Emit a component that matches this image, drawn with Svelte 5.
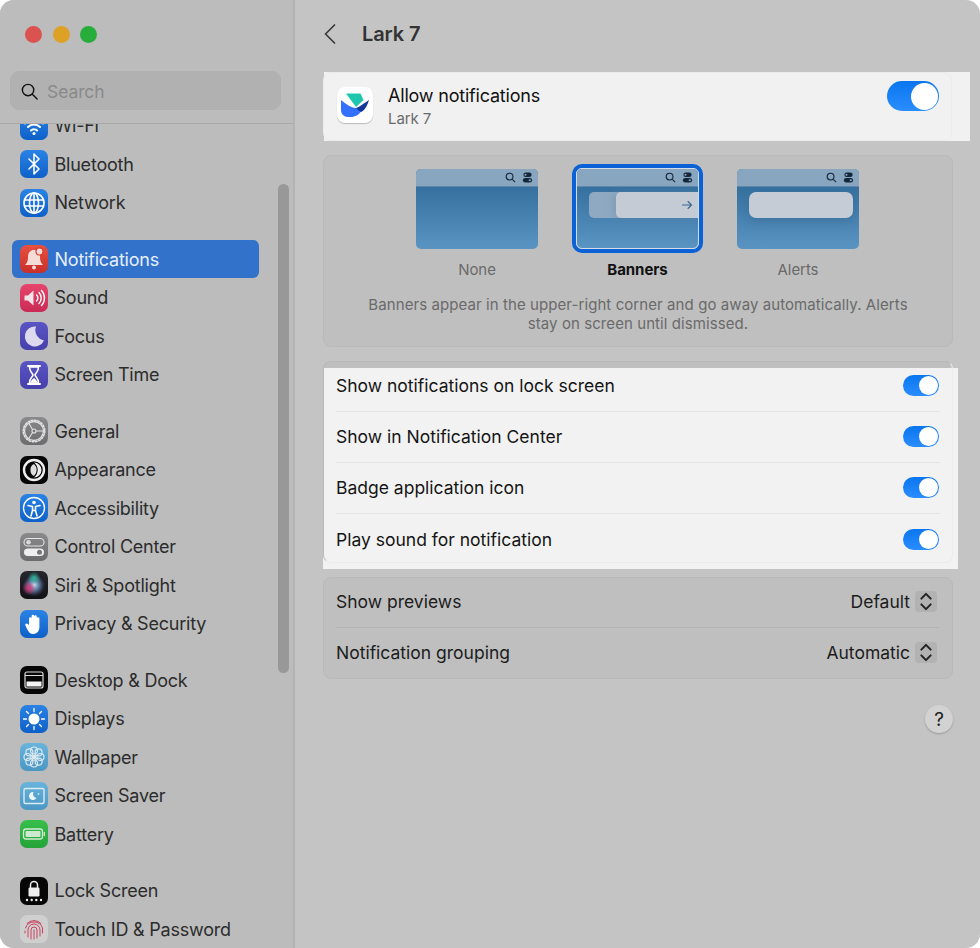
<script>
  const groups = [
    [['wifi','Wi-Fi'],['bt','Bluetooth'],['net','Network']],
    [['notif','Notifications'],['sound','Sound'],['focus','Focus'],['time','Screen Time']],
    [['general','General'],['appear','Appearance'],['access','Accessibility'],['control','Control Center'],['siri','Siri & Spotlight'],['privacy','Privacy & Security']],
    [['desktop','Desktop & Dock'],['displays','Displays'],['wall','Wallpaper'],['saver','Screen Saver'],['battery','Battery']],
    [['lock','Lock Screen'],['touch','Touch ID & Password']]
  ];
  const toggles = ['Show notifications on lock screen','Show in Notification Center','Badge application icon','Play sound for notification'];
  const selects = [['Show previews','Default'],['Notification grouping','Automatic']];
  const previews = [['none','None'],['banners','Banners'],['alerts','Alerts']];
</script>

{#snippet glyph(k)}
  <svg viewBox="0 0 28 28" class="glyph" fill="none" stroke="#fff" stroke-width="1.6" stroke-linecap="round" stroke-linejoin="round">
    {#if k==='wifi'}
      <path d="M5 11.5a13 13 0 0 1 18 0M8 15a8.500 8.500 0 0 1 12 0M11 18.500a4 4 0 0 1 6 0" stroke-width="2"/><circle cx="14" cy="21.500" r="1.500" fill="#fff" stroke="none"/>
    {:else if k==='bt'}
      <path d="M9 9l10 10-5 5V4l5 5L9 19"/>
    {:else if k==='net'}
      <circle cx="14" cy="14" r="10"/><ellipse cx="14" cy="14" rx="4.500" ry="10"/><path d="M14 4v20M4.500 11h19M4.500 17h19"/>
    {:else if k==='notif'}
      <path d="M14 5c-4 0-6 3-6 7 0 4-1 6-3 8h18c-2-2-3-4-3-8 0-4-2-7-6-7z" fill="#f6dcd7" stroke="none"/><circle cx="14" cy="22.500" r="2" fill="#f6dcd7" stroke="none"/><circle cx="19.500" cy="6.500" r="3.500" fill="#f6dcd7" stroke="#d93a30" stroke-width="1.200"/>
    {:else if k==='sound'}
      <path d="M4.500 11.500h3.500l5.500-5v15l-5.500-5H4.500z" fill="#f4e3e8" stroke="none"/><path d="M16.500 11a4 4 0 0 1 0 6M19 8.500a8 8 0 0 1 0 11M21.500 6.500a11 11 0 0 1 0 15" stroke-width="1.400"/>
    {:else if k==='focus'}
      <path d="M16 4.500a10 10 0 1 0 8 14A10.500 10.500 0 0 1 16 4.500z" fill="#dcd9ee" stroke="none"/>
    {:else if k==='time'}
      <path d="M8 5h12M8 23h12" stroke-width="2"/><path d="M9.500 6c0 5 3 6 3.500 8-.5 2-3.500 3-3.500 8h9c0-5-3-6-3.500-8 .5-2 3.500-3 3.500-8z"/><path d="M10.500 21.500c.5-2.500 2.500-3.500 3.500-4.500 1 1 3 2 3.500 4.500z" fill="#fff" stroke="none"/>
    {:else if k==='general'}
      <circle cx="14" cy="14" r="9.500" stroke="#e2e2e2" stroke-width="1.300"/><circle cx="14" cy="14" r="10.800" stroke="#e2e2e2" stroke-width="1.500" stroke-dasharray="1.700 1.700"/><circle cx="14" cy="14" r="2" stroke="#e2e2e2" stroke-width="1.100"/><path d="M12.500 12.500L9 6.500M16 14h8M12.500 15.500L8.500 22" stroke="#e2e2e2" stroke-width="1.100"/>
    {:else if k==='appear'}
      <circle cx="14" cy="14" r="10" stroke="#eee" stroke-width="2.400"/><path d="M14 6.500a7.500 7.500 0 0 1 0 15 9.500 9.500 0 0 0 0-15z" fill="#eee" stroke="none"/><path d="M14 8a6 6 0 0 0-3.500 6 6 6 0 0 0 3.500 6 8 8 0 0 0 0-12z" fill="#ddd" stroke="none"/>
    {:else if k==='access'}
      <circle cx="14" cy="14" r="10.500" stroke-width="1.300"/><circle cx="14" cy="8.500" r="1.800" fill="#fff" stroke="none"/><path d="M8 11.500l4.500 1v4l-1.500 5.500M20 11.500l-4.500 1v4l1.500 5.500M12.500 16.500h3" stroke-width="1.600"/>
    {:else if k==='control'}
      <rect x="4" y="5.500" width="20" height="7.500" rx="3.750" stroke="#e6e6e6" stroke-width="1.100"/><circle cx="8.500" cy="9.250" r="2.300" fill="#d8d8d8" stroke="none"/><rect x="4" y="15.500" width="20" height="7.500" rx="3.750" fill="#eee" stroke="none"/><circle cx="19.500" cy="19.250" r="2.500" fill="#777" stroke="none"/>
    {:else if k==='siri'}
      <defs>
        <radialGradient id="siriG" cx="50%" cy="50%" r="50%"><stop offset="0" stop-color="#d6e6ee"/><stop offset=".35" stop-color="#6d93b8"/><stop offset=".8" stop-color="#30334a"/><stop offset="1" stop-color="#1a1a22"/></radialGradient>
        <radialGradient id="siriP" cx="50%" cy="50%" r="50%"><stop offset="0" stop-color="#d83a78"/><stop offset="1" stop-color="#d83a78" stop-opacity="0"/></radialGradient>
        <radialGradient id="siriT" cx="50%" cy="50%" r="50%"><stop offset="0" stop-color="#2fb59a"/><stop offset="1" stop-color="#2fb59a" stop-opacity="0"/></radialGradient>
      </defs>
      <circle cx="14" cy="14" r="11" fill="url(#siriG)" stroke="none"/><circle cx="9" cy="17" r="7" fill="url(#siriP)" stroke="none"/><circle cx="14" cy="7" r="6.500" fill="url(#siriT)" stroke="none"/>
    {:else if k==='privacy'}
      <path d="M9 15V8.500a1.300 1.300 0 0 1 2.600 0V6a1.300 1.300 0 0 1 2.600 0V6.500a1.300 1.300 0 0 1 2.600 0v2a1.300 1.300 0 0 1 2.600 0V17c0 4-2.500 7-6 7-3 0-4.500-1.500-6-4.500l-2-4c-.8-1.600 1.300-2.800 2.300-1.400z" fill="#fff" stroke="none"/>
    {:else if k==='desktop'}
      <rect x="5" y="6" width="18" height="16" rx="2" stroke="#ddd" stroke-width="1.200"/><path d="M5.500 9.500h17" stroke="#ddd" stroke-width="1"/><rect x="6.500" y="15.500" width="15" height="5" fill="#f4f4f4" stroke="none"/>
    {:else if k==='displays'}
      <circle cx="14" cy="14" r="5.500" fill="#fff" stroke="none"/><path d="M14 3.500v3M14 21.500v3M3.500 14h3M21.500 14h3M6.500 6.500l2 2M19.500 19.500l2 2M6.500 21.500l2-2M19.500 8.500l2-2" stroke-width="1.300"/>
    {:else if k==='wall'}
      <g stroke="#dfeaf0" stroke-width="1.100"><circle cx="14" cy="7.500" r="3.500"/><circle cx="14" cy="20.500" r="3.500"/><circle cx="7.500" cy="14" r="3.500"/><circle cx="20.500" cy="14" r="3.500"/><circle cx="9.400" cy="9.400" r="3.500"/><circle cx="18.600" cy="9.400" r="3.500"/><circle cx="9.400" cy="18.600" r="3.500"/><circle cx="18.600" cy="18.600" r="3.500"/><circle cx="14" cy="14" r="1.800" fill="#dfeaf0"/></g>
    {:else if k==='saver'}
      <rect x="4" y="6.500" width="20" height="15" rx="1.500" stroke="#dcebf2" stroke-width="1.400"/><path d="M13.500 10a4 4 0 1 0 3 6 4 4 0 0 1-3-6z" fill="#eef5f9" stroke="none"/><circle cx="18.500" cy="12" r=".8" fill="#fff" stroke="none"/>
    {:else if k==='battery'}
      <rect x="3.500" y="9" width="19" height="10" rx="2.500" stroke="#d5ecd6" stroke-width="1.300"/><rect x="5.500" y="11" width="15" height="6" rx="1" fill="#cfe9d0" stroke="none"/><path d="M24.300 12.500v3" stroke="#d5ecd6" stroke-width="1.300"/>
    {:else if k==='lock'}
      <rect x="8.500" y="10.500" width="11" height="9" rx="1.300" fill="#eee" stroke="none"/><path d="M10.500 10.500V8a3.500 3.500 0 0 1 7 0v2.500" stroke="#eee" stroke-width="1.500"/><g fill="#eee" stroke="none"><circle cx="7" cy="23" r="1.200"/><circle cx="11.700" cy="23" r="1.200"/><circle cx="16.300" cy="23" r="1.200"/><circle cx="21" cy="23" r="1.200"/></g>
    {:else if k==='touch'}
      <g stroke="#c9425f" stroke-width="1"><path d="M7 8.500a9.500 9.500 0 0 1 14 0"/><path d="M5.500 13a9 9 0 0 1 17 0v5"/><path d="M8 22v-7a6 6 0 0 1 12 0v6"/><path d="M11 24v-9a3 3 0 0 1 6 0v8"/><path d="M14 24v-9"/><path d="M5 18v-2"/></g>
    {/if}
  </svg>
{/snippet}

{#snippet toggle(big)}
  <span class="toggle" class:big><span class="knob"></span></span>
{/snippet}

<div class="window">
  <aside class="sidebar">
    <div class="lights"><i class="red"></i><i class="amber"></i><i class="green"></i></div>
    <div class="search">
      <svg viewBox="0 0 20 20" class="mag" fill="none" stroke="#111" stroke-width="1.500" stroke-linecap="round"><circle cx="8.500" cy="8.500" r="6"/><path d="M13 13l5 5"/></svg>
      <span>Search</span>
    </div>
    <div class="scrollarea">
      <nav class="list">
        {#each groups as g}
          <div class="group">
            {#each g as [k, label]}
              <div class="row" class:sel={k==='notif'}>
                <span class="icon {k}">{@render glyph(k)}</span>
                <span>{label}</span>
              </div>
            {/each}
          </div>
        {/each}
      </nav>
    </div>
    <div class="thumb"></div>
  </aside>

  <main class="main">
    <header class="title">
      <svg viewBox="0 0 12 20" class="back" fill="none" stroke="#3a3a3a" stroke-width="1.700" stroke-linecap="round" stroke-linejoin="round"><path d="M10.500 1L1.500 10l9 9"/></svg>
      <h1>Lark 7</h1>
    </header>

    <section class="allow">
      <span class="lark">
        <svg viewBox="0 0 36 36" width="36" height="36">
          <path d="M9 6.500H23.500L26.500 13 19 20z" fill="#1fc6ae"/>
          <path d="M4 13c5 4 10 8 15 8l6 2c-3 5-7 7-11 7h-3c-4 0-7-3-7-7z" fill="#3370ff"/>
          <path d="M19 21c4-1 8-5 13-8-2 6-4 10-8 12-2-1-4-3-5-4z" fill="#12369a"/>
        </svg>
      </span>
      <div class="allow-text"><div class="allow-name">Allow notifications</div><div class="allow-sub">Lark 7</div></div>
      {@render toggle(true)}
    </section>

    <section class="styles">
      <div class="previews">
        {#each previews as [k, label]}
          <div class="preview">
            <div class="frame" class:active={k==='banners'}>
              <div class="shot">
                <div class="menubar">
                  <svg viewBox="0 0 12 12" class="mini" fill="none" stroke="#14263a" stroke-width="1.200"><circle cx="5" cy="5" r="3.700"/><path d="M8 8l3 3"/></svg>
                  <svg viewBox="0 0 12 12" class="mini" fill="#14263a" stroke="none"><rect x="1.500" y=".5" width="9" height="5" rx="2.500"/><rect x="1" y="6.500" width="10" height="5" rx="2.500"/><circle cx="3.800" cy="3" r="1.200" fill="#88a6bf"/><circle cx="8.500" cy="9" r="1.200" fill="#88a6bf"/></svg>
                </div>
                {#if k==='banners'}
                  <div class="ghost"></div>
                  <div class="banner">
                    <svg viewBox="0 0 12 12" class="arrow" fill="none" stroke="#3e6690" stroke-width="1.100" stroke-linecap="round" stroke-linejoin="round"><path d="M1.500 6h9M7 2.500L10.500 6 7 9.500"/></svg>
                  </div>
                {:else if k==='alerts'}
                  <div class="alert"></div>
                {/if}
              </div>
            </div>
            <div class="plabel" class:on={k==='banners'}>{label}</div>
          </div>
        {/each}
      </div>
      <p class="desc">Banners appear in the upper-right corner and go away automatically. Alerts<br>stay on screen until dismissed.</p>
    </section>

    <section class="togglecard">
      <div class="rows">
        {#each toggles as t}
          <div class="trow"><span>{t}</span>{@render toggle(false)}</div>
        {/each}
      </div>
    </section>

    <section class="selectcard">
      {#each selects as [l, v]}
        <div class="srow">
          <span>{l}</span>
          <span class="val">{v}
            <span class="stepper"><svg viewBox="0 0 12 18" width="14" height="21" fill="none" stroke="#222" stroke-width="1.700" stroke-linecap="round" stroke-linejoin="round"><path d="M2 6.500L6 2.500l4 4M2 11.500L6 15.500l4-4"/></svg></span>
          </span>
        </div>
      {/each}
    </section>

    <div class="helpwrap"><span class="help">?</span></div>
  </main>
</div>

<style>
  :global(body) { margin: 0; background: #fff; }
  .window {
    width: 980px; height: 948px; display: flex; overflow: hidden; border-radius: 14px;
    font-family: Inter, "Liberation Sans", sans-serif; background: #c4c4c4; color: #1a1a1a;
  }
  .sidebar {
    position: relative; width: 293px; flex: none; height: 948px; background: #bcbcbc;
    border-right: 2px solid #b3b3b3; box-sizing: content-box; display: flex; flex-direction: column;
  }
  .lights { display: flex; gap: 10.500px; padding: 25.500px 0 0 25px; height: 20.500px; }
  .lights i { width: 17px; height: 17px; border-radius: 50%; display: block; }
  .red { background: #db5350; }
  .amber { background: #dda126; }
  .green { background: #27ad3c; }
  .search {
    margin: 25px 12px 0 10px; height: 39px; border-radius: 9px; background: #b1b1b1;
    border: 1px solid #b0b0b0; box-sizing: border-box; display: flex; align-items: center; gap: 8px;
    padding: 1px 0 0 9px; color: #8a8a8a; font-size: 17.500px; letter-spacing: -.1px;
  }
  .mag { width: 19px; height: 19px; }
  .scrollarea { margin-top: 13px; border-top: 1px solid #a9a9a9; height: 824px; overflow: hidden; }
  .list { margin-top: -17.700px; padding: 0 34px 0 12px; }
  .group + .group { margin-top: 18px; }
  .row {
    height: 38.500px; display: flex; align-items: center; gap: 6.500px; padding-left: 8px; border-radius: 6px;
    font-size: 18px; color: #2c2c2c; letter-spacing: -.22px; box-sizing: border-box;
  }
  .row.sel { background: #3272cb; color: #e6eefa; }
  .icon { width: 28px; height: 28px; border-radius: 7px; flex: none; display: block; background: linear-gradient(#2a83e4, #0e60c9); }
  .glyph { width: 28px; height: 28px; display: block; }
  .notif { background: linear-gradient(#e8503f, #c9302a); }
  .sound { background: linear-gradient(#e8456c, #c92a55); }
  .focus, .time { background: linear-gradient(#5a55c4, #4640ab); }
  .general, .control { background: linear-gradient(#8a8a8c, #6c6c6e); }
  .appear, .desktop, .lock { background: #060606; }
  .siri { background: linear-gradient(#26262c, #121216); }
  .wall, .saver { background: linear-gradient(#68b4dc, #4b97c4); }
  .battery { background: linear-gradient(#38bf4a, #24a338); }
  .touch { background: #cfcfcf; }
  .thumb { position: absolute; left: 278px; top: 184px; width: 11px; height: 489px; border-radius: 6px; background: #989898; }

  .main { flex: 1; padding-left: 28px; min-width: 0; display: flex; flex-direction: column; align-items: flex-start; }
  .title { height: 72px; display: flex; align-items: center; padding: 0 0 4px 1px; box-sizing: border-box; }
  .back { width: 12px; height: 20px; margin-right: 26px; }
  h1 { margin: 0; font-size: 20px; font-weight: 600; color: #333; letter-spacing: -.1px; }

  .allow {
    position: relative; width: 646px; height: 69px; margin-left: 1px; background: #f1f1f1; display: flex; align-items: flex-start;
    padding: 9px 31px 0 13px; box-sizing: border-box;
  }
  .allow::after { content: ""; position: absolute; left: -1px; top: 0; width: 629px; height: 69px; box-sizing: border-box; border: 1px solid #ebebeb; border-radius: 8px; }
  .lark { width: 36px; height: 36px; margin-top: 6px; flex: none; border-radius: 8px; background: #fff; box-shadow: 0 1px 1px #bbb; display: block; }
  .allow-text { flex: 1; padding: 3.500px 0 0 15px; }
  .allow-name { font-size: 18px; color: #111; letter-spacing: -.2px; line-height: 22px; }
  .allow-sub { font-size: 15px; color: #6b6b6b; margin-top: 2.500px; line-height: 20px; letter-spacing: -.1px; }

  .toggle { display: block; width: 36px; height: 21px; border-radius: 11px; background: linear-gradient(#0a76ee, #2a8dff); position: relative; flex: none; }
  .knob { position: absolute; right: 1px; top: 1px; width: 19px; height: 19px; border-radius: 50%; background: #fff; }
  .toggle.big { width: 52px; height: 30px; border-radius: 15px; }
  .big .knob { width: 27px; height: 27px; top: 1.500px; right: 1.500px; }

  .styles {
    width: 630px; height: 192px; margin-top: 14px; background: #bfbfbf; border: 1px solid #b9b9b9; border-radius: 8px;
    box-sizing: border-box; display: flex; flex-direction: column; align-items: center;
  }
  .previews { display: flex; gap: 29.500px; margin: 8px 1px 0 0; }
  .preview { width: 131px; display: flex; flex-direction: column; align-items: center; }
  .frame { width: 131px; height: 89px; box-sizing: border-box; border-radius: 10px; border: 4px solid transparent; }
  .frame.active { border-color: #0b61d6; }
  .shot { width: 122px; height: 80px; box-sizing: border-box; margin: .5px; border-radius: 5px; overflow: hidden; position: relative; background: linear-gradient(#36709f 18px, #5a94c2); }
  .frame.active .shot { width: 123px; height: 81px; margin: 0; border: 1px solid #d4dde6; border-radius: 6px; }
  .menubar { height: 17px; background: #88a6bf; display: flex; justify-content: flex-end; align-items: center; gap: 6px; padding-right: 5px; border-bottom: 1px solid #5f88ab; }
  .mini { width: 11px; height: 11px; }
  .ghost { position: absolute; left: 12px; top: 23px; width: 50px; height: 26px; border-radius: 5px; background: #8fa9c2; }
  .banner { position: absolute; left: 39px; top: 23px; right: 0; height: 26px; border-radius: 5px 0 0 5px; background: #c4cbd4; display: flex; align-items: center; justify-content: flex-end; padding-right: 5px; box-shadow: -4px 0 6px #6c87a255; }
  .arrow { width: 12px; height: 12px; }
  .alert { position: absolute; left: 12px; top: 23px; width: 104px; height: 26px; border-radius: 7px; background: #c5ccd6; box-shadow: 0 3px 8px #2f5d8866; }
  .plabel { font-size: 15px; color: #6a6a6a; margin-top: 5.500px; line-height: 22px; letter-spacing: -.05px; }
  .plabel.on { color: #111; font-weight: 700; }
  .desc { margin: 14.500px 0 0; font-size: 15px; line-height: 19px; color: #6a6a6a; text-align: center; letter-spacing: .08px; }

  .togglecard { position: relative; width: 630px; height: 202px; margin-top: 14px; background: #bfbfbf; border-radius: 8px; }
  .togglecard::before { content: ""; position: absolute; left: 0; top: 7px; width: 635px; height: 201px; background: #f2f2f2; }
  .togglecard::after { content: ""; position: absolute; inset: 0; box-sizing: border-box; border: 1px solid #b9b9b9; border-bottom-color: #ebebeb; border-right-color: #ebebeb; border-radius: 8px; }
  .rows { position: relative; z-index: 1; padding: 0 13px; }
  .trow { height: 51px; box-sizing: border-box; padding-bottom: 1px; display: flex; align-items: center; justify-content: space-between; font-size: 17.500px; color: #151515; border-bottom: 1px solid #e4e4e4; }
  .trow:last-child { border-bottom: 0; }
  .trow > :global(.toggle) { margin-right: 1px; }

  .selectcard { width: 630px; height: 102px; margin-top: 14px; background: #bfbfbf; border: 1px solid #b9b9b9; border-radius: 8px; box-sizing: border-box; padding: 0 13px 0 12px; }
  .srow { height: 51px; box-sizing: border-box; padding-bottom: 3px; display: flex; align-items: center; justify-content: space-between; font-size: 17.500px; color: #1c1c1c; }
  .srow:first-child { border-bottom: 1px solid #b4b4b4; height: 50px; padding-bottom: 2px; }
  .val { display: flex; align-items: center; gap: 5px; margin-right: 2px; }
  .stepper { width: 22px; height: 21px; background: #b2b2b2; border-radius: 4px; display: flex; align-items: center; justify-content: center; }

  .helpwrap { width: 630px; display: flex; justify-content: flex-end; margin-top: 26px; }
  .help { width: 28px; height: 28px; border-radius: 50%; background: #d2d2d2; box-shadow: 0 1px 2px #9a9a9a; display: flex; align-items: center; justify-content: center; font-size: 19px; color: #222; font-weight: 400; }
</style>
